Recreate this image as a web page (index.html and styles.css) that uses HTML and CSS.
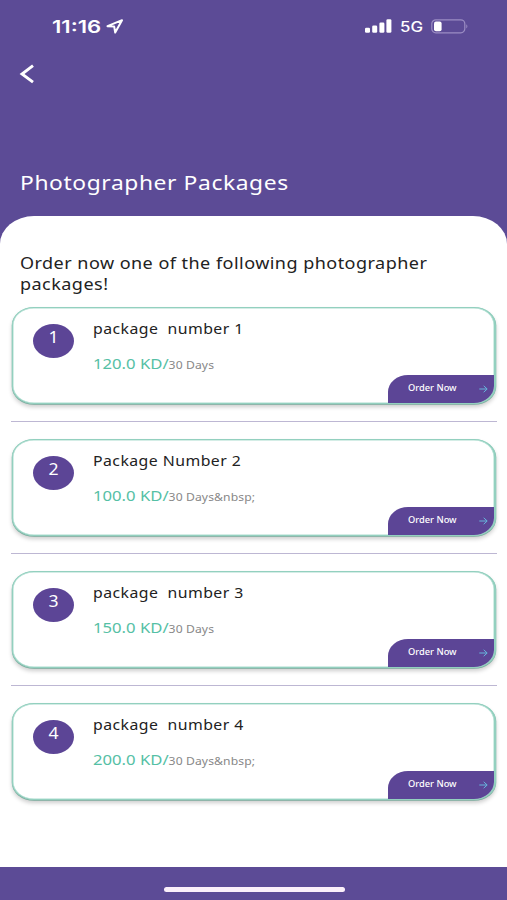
FILE: index.html
```html
<!DOCTYPE html>
<html lang="en">
<head>
<meta charset="utf-8">
<title>Photographer Packages</title>
<link rel="stylesheet" href="styles.css">
</head>
<body>
<header class="header">
  <div class="status">
    <span class="time">11:16</span>
    <svg class="locate" width="18" height="15" viewBox="0 0 18 15"><path d="M1.5 7.2 16 1.2 9.2 13.5 8.2 7.6Z" fill="none" stroke="#fff" stroke-width="2" stroke-linejoin="round"/></svg>
    <svg class="signal" width="27" height="14" viewBox="0 0 27 14" fill="#fff"><rect x="0" y="8.8" width="5" height="5" rx="1.3"/><rect x="7.2" y="6.4" width="5" height="7.4" rx="1.3"/><rect x="14.4" y="3.5" width="5" height="10.3" rx="1.3"/><rect x="21.4" y="0.2" width="5" height="13.6" rx="1.3"/></svg>
    <span class="network">5G</span>
    <svg class="battery" width="38" height="15" viewBox="0 0 38 15"><rect x="0.8" y="0.8" width="33" height="13" rx="4" fill="none" stroke="#9b8dc3" stroke-width="1.2"/><rect x="3" y="2.6" width="7.6" height="9.6" rx="2" fill="#fff"/><path d="M35.3 5.2q2.2 2.1 0 4.4z" fill="#9b8dc3"/></svg>
  </div>
  <svg class="back" width="16" height="20" viewBox="0 0 16 20"><path d="M14 1.6 3 10 14 18.2" fill="none" stroke="#fff" stroke-width="2.9"/></svg>
  <h1 class="title">Photographer Packages</h1>
</header>
<main class="sheet">
  <p class="intro">Order now one of the following photographer<br>packages!</p>
  <section class="card">
    <div class="badge"><span>1</span></div>
    <div class="info"><h2 class="name">package&nbsp; number 1</h2><p class="price">120.0 KD/<small>30 Days</small></p></div>
    <button class="order"><span>Order Now</span><svg width="9" height="8" viewBox="0 0 9 8"><path d="M.3 4H8M4.7 .8 8.2 4 4.7 7.2"/></svg></button>
  </section>
  <hr>
  <section class="card">
    <div class="badge"><span>2</span></div>
    <div class="info"><h2 class="name">Package Number 2</h2><p class="price">100.0 KD/<small>30 Days&amp;nbsp;</small></p></div>
    <button class="order"><span>Order Now</span><svg width="9" height="8" viewBox="0 0 9 8"><path d="M.3 4H8M4.7 .8 8.2 4 4.7 7.2"/></svg></button>
  </section>
  <hr>
  <section class="card">
    <div class="badge"><span>3</span></div>
    <div class="info"><h2 class="name">package&nbsp; number 3</h2><p class="price">150.0 KD/<small>30 Days</small></p></div>
    <button class="order"><span>Order Now</span><svg width="9" height="8" viewBox="0 0 9 8"><path d="M.3 4H8M4.7 .8 8.2 4 4.7 7.2"/></svg></button>
  </section>
  <hr>
  <section class="card">
    <div class="badge"><span>4</span></div>
    <div class="info"><h2 class="name">package&nbsp; number 4</h2><p class="price">200.0 KD/<small>30 Days&amp;nbsp;</small></p></div>
    <button class="order"><span>Order Now</span><svg width="9" height="8" viewBox="0 0 9 8"><path d="M.3 4H8M4.7 .8 8.2 4 4.7 7.2"/></svg></button>
  </section>
</main>
<footer class="footer"><div class="home"></div></footer>
</body>
</html>
```
FILE: styles.css
```css
* { box-sizing: border-box; margin: 0; padding: 0; }
body {
  width: 507px;
  height: 900px;
  overflow: hidden;
  display: flex;
  flex-direction: column;
  background: #5c4b96;
  font-family: "Noto Sans", sans-serif;
  color: #222;
}
.header { height: 216px; display: flow-root; color: #fff; }
.status { height: 52px; padding: 0 38px 0 52px; display: flex; align-items: center; }
.time {
  width: 50px;
  margin-top: 1px;
  font: 600 17px/20px Inter, sans-serif;
  transform: scaleX(1.3);
  transform-origin: 0 50%;
  white-space: nowrap;
}
.locate { margin-left: 4px; }
.signal { margin-left: 241px; }
.network {
  width: 22px;
  margin: 1px 0 0 8px;
  font: 500 14px/18px Inter, sans-serif;
  transform: scaleX(1.2);
  transform-origin: 0 50%;
}
.battery { margin-left: 9px; flex: none; }
.back { display: block; margin: 12px 0 0 19px; }
.title {
  width: fit-content;
  margin: 84px 0 0 20px;
  font-size: 19px;
  line-height: 30px;
  font-weight: 400;
  letter-spacing: 0.5px;
  transform: scaleX(1.2);
  transform-origin: 0 50%;
  white-space: nowrap;
}
.sheet {
  height: 651px;
  padding: 37px 11px 0 12px;
  background: #fff;
  border-radius: 34px 34px 0 0 / 28px 28px 0 0;
}
.intro {
  width: fit-content;
  height: 54px;
  margin-left: 8px;
  font-size: 15.5px;
  line-height: 21px;
  letter-spacing: 0.4px;
  transform: scaleX(1.162);
  transform-origin: 0 0;
  white-space: nowrap;
}
.card {
  height: 97px;
  display: grid;
  grid-template-columns: 60px 1fr 106px;
  padding-left: 20px;
  border: 1px solid #93d0bf;
  border-right-width: 2px;
  border-bottom-width: 1px;
  border-radius: 22px / 18px;
  overflow: hidden;
  background: #fff;
  box-shadow: 0 3px 4px rgba(0, 0, 0, 0.2), inset 0 0 0 0.5px #a9dccd, 0 0.5px 0 0.3px #93d0bf;
}
.badge {
  width: 41px;
  height: 34px;
  margin-top: 15.5px;
  border-radius: 50%;
  background: #5c4596;
  color: #fff;
  font-size: 16px;
  line-height: 27px;
  text-align: center;
}
.badge span { display: inline-block; transform: scaleX(1.1); }
.info { white-space: nowrap; }
.name, .price {
  width: fit-content;
  font-weight: 400;
  transform-origin: 0 50%;
}
.name { margin-top: 10.5px; font-size: 14px; line-height: 20px; letter-spacing: 0.4px; transform: scaleX(1.13); }
.price { margin-top: 15px; font-size: 14px; line-height: 20px; color: #55c0a5; transform: scaleX(1.19); }
.price small { font-size: 10.2px; letter-spacing: 0.1px; color: #888; }
.order {
  align-self: end;
  height: 28px;
  display: flex;
  align-items: center;
  justify-content: space-between;
  padding: 0 6px 2px 20px;
  border: 0;
  border-radius: 20px 0 0 0 / 17px 0 0 0;
  background: #5c4596;
  color: #fff;
  font: 500 8px/12px "Noto Sans", sans-serif;
}
.order span { transform: scaleX(1.16); transform-origin: 0 50%; }
.order svg { fill: none; stroke: #66b6dc; stroke-width: 1; margin-top: 2px; }
hr { height: 1px; margin: 17px -1px 17px -1px; border: 0; background: #bdb7d3; }
.footer { height: 33px; padding-top: 20px; }
.home { width: 181px; height: 5px; margin: 0 auto 0 163.5px; border-radius: 3px; background: #fbf0fa; }
```
